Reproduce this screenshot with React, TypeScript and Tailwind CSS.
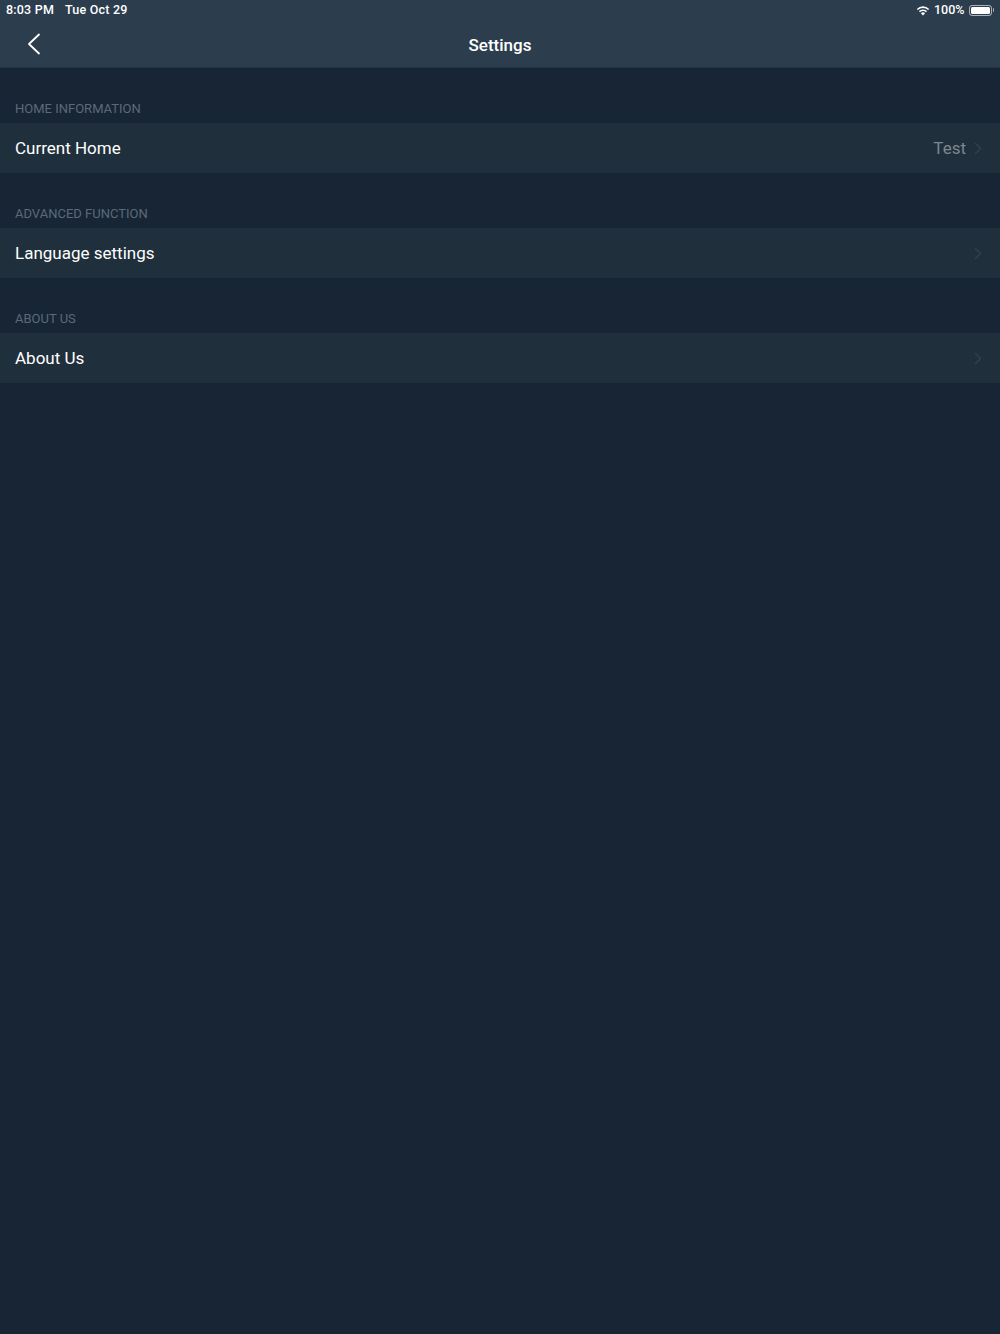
import React from "react";

const Chevron: React.FC = () => (
  <svg width="8" height="13" viewBox="0 0 8 13" fill="none" className="ml-[8px]">
    <path d="M1.5 1.5L6.5 6.5L1.5 11.5" stroke="#2f3f4c" strokeWidth="1.6" strokeLinecap="round" strokeLinejoin="round" />
  </svg>
);

const sections = [
  { label: "HOME INFORMATION", title: "Current Home", value: "Test" },
  { label: "ADVANCED FUNCTION", title: "Language settings", value: "" },
  { label: "ABOUT US", title: "About Us", value: "" },
];

export default function App() {
  return (
    <div className="w-[1000px] h-[1334px] bg-[#172535] font-['Roboto','Noto_Sans',sans-serif] text-white">
      <div className="bg-[#2c3e4e] h-[68px] border-b border-[#233342]">
        <div className="h-[20px] flex items-center justify-between px-[6px] text-[12.5px] font-medium">
          <div className="flex gap-[11px] tracking-[0.2px]">
            <span>8:03 PM</span>
            <span>Tue Oct 29</span>
          </div>
          <div className="flex items-center gap-[4px]">
            <svg width="14" height="11" viewBox="0 0 14 11">
              <path d="M7 10.5L4.9 8.2a3 3 0 0 1 4.2 0Z" fill="white" />
              <path d="M2.9 6.1a5.8 5.8 0 0 1 8.2 0l-1.1 1.2a4.2 4.2 0 0 0-6 0Z" fill="white" />
              <path d="M0.8 3.9a8.8 8.8 0 0 1 12.4 0l-1.1 1.2a7.2 7.2 0 0 0-10.2 0Z" fill="white" />
            </svg>
            <span>100%</span>
            <div className="flex items-center">
              <div className="w-[23px] h-[11px] rounded-[3px] border border-white/60 p-[1px]">
                <div className="w-full h-full bg-white rounded-[1.5px]" />
              </div>
              <div className="w-[1.5px] h-[4px] bg-white/60 rounded-r-sm ml-[1px]" />
            </div>
          </div>
        </div>
        <div className="relative h-[48px] flex items-center justify-center pt-[3px]">
          <svg width="14" height="22" viewBox="0 0 14 22" fill="none" className="absolute left-[27px] top-[13px]">
            <path d="M12 1.5L2 11L12 20.5" stroke="white" strokeWidth="1.8" strokeLinecap="round" strokeLinejoin="round" />
          </svg>
          <span className="text-[17px] font-medium">Settings</span>
        </div>
      </div>
      {sections.map((s) => (
        <div key={s.label}>
          <div className="h-[55px] flex items-end pb-[5px] px-[15px] text-[13px] text-[#5b6a78]">{s.label}</div>
          <div className="h-[50px] bg-[#1f2f3b] flex items-center pl-[15px] pr-[18px] text-[17px] pt-[1px]">
            <span className="flex-1">{s.title}</span>
            {s.value && <span className="text-[#7c8791]">{s.value}</span>}
            <Chevron />
          </div>
        </div>
      ))}
    </div>
  );
}
